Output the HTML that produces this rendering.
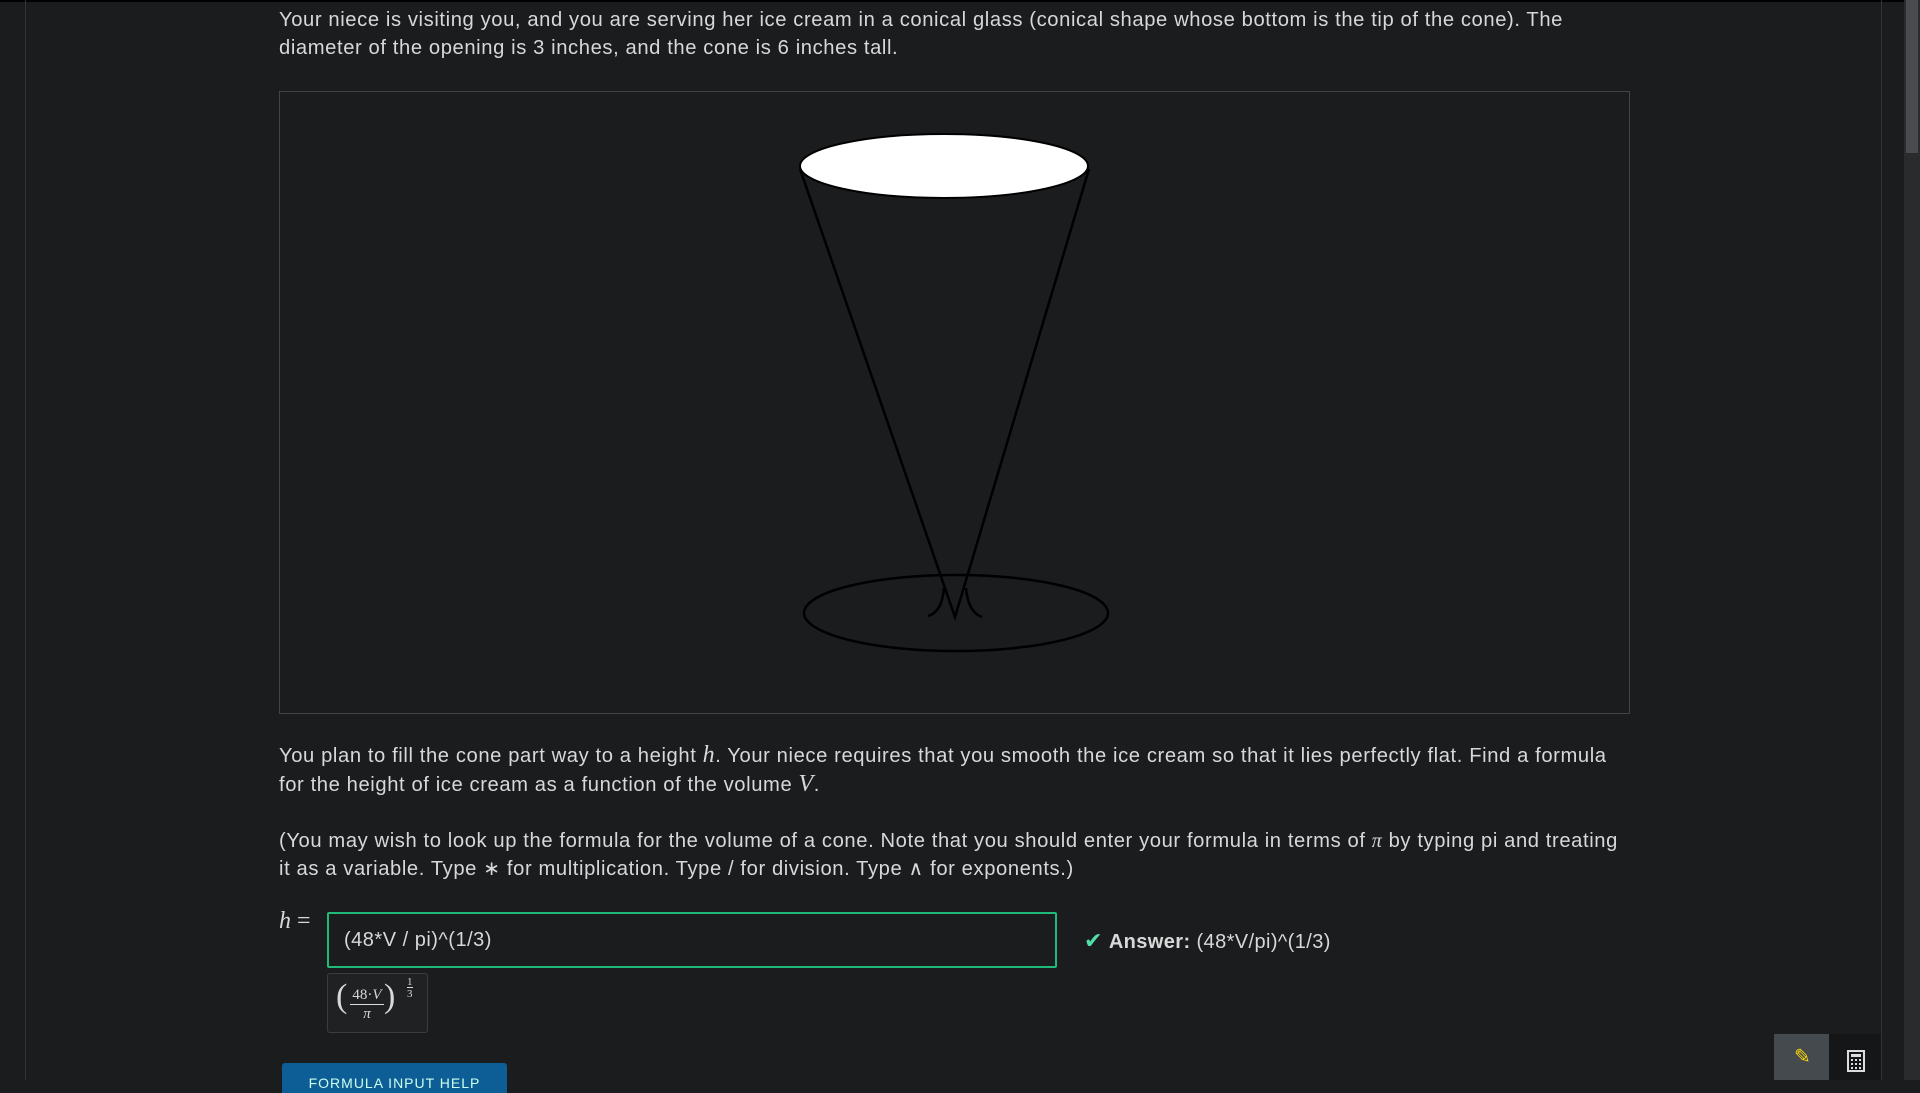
<!DOCTYPE html>
<html><head><meta charset="utf-8"><style>
html,body{margin:0;padding:0;width:1920px;height:1080px;overflow:hidden;background:#1b1c1e;font-family:"Liberation Sans",sans-serif;color:#d8d8d8}
.top{position:absolute;left:0;top:0;width:1920px;height:2px;background:#000}
.lb{position:absolute;left:25px;top:0;width:1px;height:1080px;background:#333}
.rb{position:absolute;left:1881px;top:0;width:1px;height:1080px;background:#333}
.sb{position:absolute;left:1904px;top:0;width:16px;height:1080px;background:#2a2b2d}
.th{position:absolute;left:1906px;top:0;width:12px;height:153px;background:#4a4b4e}
p{position:absolute;left:279px;margin:0;font-size:20.2px;line-height:28px;width:1342px;letter-spacing:0.6px}
.m{font-family:"Liberation Serif",serif;font-style:italic;font-size:24px}
.box{position:absolute;left:279px;top:91px;width:1349px;height:621px;border:1px solid #444}
.inp{position:absolute;left:327px;top:912px;width:711px;height:52px;border:2px solid #20b97a;border-radius:2px;font-size:20px;line-height:52px;padding-left:15px;box-sizing:content-box;letter-spacing:0.5px}
.prev{position:absolute;left:327px;top:973px;width:99px;height:58px;border:1px solid #3a3d40;background:#1f2123;border-radius:3px}
.btn{position:absolute;left:282px;top:1063px;width:225px;height:30px;background:#0d5e96;border-radius:3px 3px 0 0;color:#cfe;font-size:14px;text-align:center;line-height:40px;letter-spacing:1px;overflow:hidden}
.t1{position:absolute;left:1774px;top:1034px;width:55px;height:46px;background:#454a4e}
.t2{position:absolute;left:1829px;top:1034px;width:52px;height:46px;background:#151617}
</style></head><body>
<div class="top"></div><div class="lb"></div><div class="rb"></div><div class="sb"></div><div class="th"></div>
<p style="top:6px">Your niece is visiting you, and you are serving her ice cream in a conical glass (conical shape whose bottom is the tip of the cone). The diameter of the opening is 3 inches, and the cone is 6 inches tall.</p>
<div class="box"></div>
<svg style="position:absolute;left:0;top:0" width="1920" height="1080">
<g fill="none" stroke="#000" stroke-width="2.5">
<ellipse cx="956" cy="613" rx="152" ry="38"/>
<path d="M800 169 L955 617 L1089 169"/>
<path d="M944 588 Q942 612 928 616"/>
<path d="M966 588 Q968 612 982 617"/>
</g>
<ellipse cx="944" cy="166" rx="144" ry="32" fill="#fff" stroke="#000" stroke-width="2"/>
</svg>
<p style="top:741px">You plan to fill the cone part way to a height <span class="m">h</span>. Your niece requires that you smooth the ice cream so that it lies perfectly flat. Find a formula for the height of ice cream as a function of the volume <span class="m">V</span>.</p>
<p style="top:827px;width:1345px">(You may wish to look up the formula for the volume of a cone. Note that you should enter your formula in terms of <span class="m" style="font-size:20px">π</span> by typing pi and treating it as a variable. Type ∗ for multiplication. Type / for division. Type ∧ for exponents.)</p>
<div style="position:absolute;left:279px;top:908px;font-size:24px;font-family:'Liberation Serif',serif"><i>h</i> =</div>
<div class="inp">(48*V / pi)^(1/3)</div>
<div style="position:absolute;left:1084px;top:928px;font-size:20px;letter-spacing:0.4px"><span style="color:#4fe0a8;font-size:22px">✔</span> <b>Answer:</b> (48*V/pi)^(1/3)</div>
<div class="prev"><div style="position:absolute;left:8px;top:8px;font-family:'Liberation Serif',serif;font-size:15px">
<span style="font-size:34px;position:absolute;left:0;top:-4px">(</span>
<span style="position:absolute;left:14px;top:5px;width:34px;text-align:center;border-bottom:1px solid #ddd">48·<i>V</i></span>
<span style="position:absolute;left:14px;top:24px;width:34px;text-align:center"><i>π</i></span>
<span style="font-size:34px;position:absolute;left:48px;top:-4px">)</span>
<span style="position:absolute;left:71px;top:-6px;font-size:11px;line-height:12px;text-align:center">1<br><span style="border-top:1px solid #ddd">3</span></span>
</div></div>
<div class="btn">FORMULA INPUT HELP</div>
<div class="t1"><span style="position:absolute;left:20px;top:10px;color:#f5d60a;font-size:20px">✎</span></div>
<div class="t2"><svg style="position:absolute;left:18px;top:16px" width="18" height="22"><rect x="1" y="1" width="16" height="20" fill="none" stroke="#ddd" stroke-width="2"/><rect x="4" y="4" width="10" height="3" fill="#ddd"/><g fill="#ddd"><rect x="4" y="9" width="2" height="2"/><rect x="8" y="9" width="2" height="2"/><rect x="12" y="9" width="2" height="2"/><rect x="4" y="13" width="2" height="2"/><rect x="8" y="13" width="2" height="2"/><rect x="12" y="13" width="2" height="2"/><rect x="4" y="17" width="2" height="2"/><rect x="8" y="17" width="2" height="2"/><rect x="12" y="17" width="2" height="2"/></g></svg></div>
</body></html>
